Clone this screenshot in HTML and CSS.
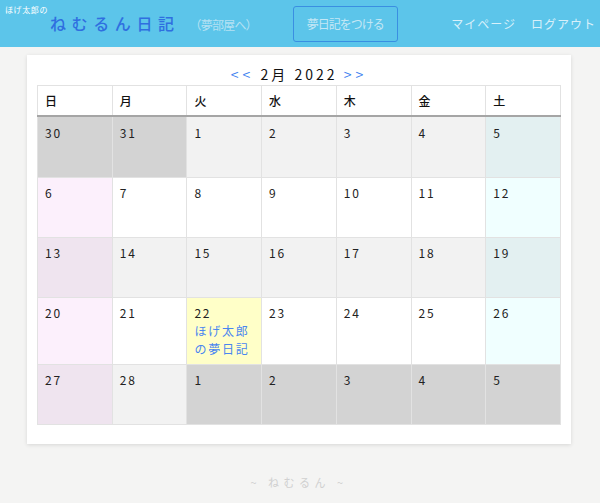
FILE: index.html
```html
<!DOCTYPE html>
<html lang="ja">
<head>
<meta charset="utf-8">
<link rel="stylesheet" href="styles.css">
</head>
<body>
<header class="header">
  <div class="brand">
    <div class="brand-owner">ほげ太郎の</div>
    <div class="brand-title">ねむるん日記</div>
  </div>
  <a class="room-link">（夢部屋へ）</a>
  <a class="write-btn">夢日記をつける</a>
  <nav class="nav">
    <a class="nav-link">マイページ</a>
    <a class="nav-link">ログアウト</a>
  </nav>
</header>
<main class="main">
  <section class="card">
    <div class="month-title"><a class="month-nav">&lt;&lt;</a> 2月 2022 <a class="month-nav">&gt;&gt;</a></div>
    <table class="cal">
      <thead>
        <tr><th>日</th><th>月</th><th>火</th><th>水</th><th>木</th><th>金</th><th>土</th></tr>
      </thead>
      <tbody>
        <tr class="striped first">
          <td class="other">30</td><td class="other">31</td><td>1</td><td>2</td><td>3</td><td>4</td><td class="sat">5</td>
        </tr>
        <tr>
          <td class="sun">6</td><td>7</td><td>8</td><td>9</td><td>10</td><td>11</td><td class="sat">12</td>
        </tr>
        <tr class="striped">
          <td class="sun">13</td><td>14</td><td>15</td><td>16</td><td>17</td><td>18</td><td class="sat">19</td>
        </tr>
        <tr>
          <td class="sun">20</td><td>21</td><td class="today">22<br><a class="entry">ほげ太郎の夢日記</a></td><td>23</td><td>24</td><td>25</td><td class="sat">26</td>
        </tr>
        <tr class="striped">
          <td class="sun">27</td><td>28</td><td class="other">1</td><td class="other">2</td><td class="other">3</td><td class="other">4</td><td class="other">5</td>
        </tr>
      </tbody>
    </table>
  </section>
  <footer class="footer">~ ねむるん ~</footer>
</main>
</body>
</html>
```
FILE: styles.css
```css
* { box-sizing: border-box; }
html, body { margin: 0; padding: 0; }
body {
  background: #f4f4f3;
  font-family: "Noto Sans CJK JP", "Noto Sans", sans-serif;
  color: #222;
  width: 600px;
  height: 503px;
  overflow: hidden;
}
.header {
  height: 47px;
  background: #5cc5ea;
  display: flex;
  align-items: center;
}
.brand {
  align-self: flex-start;
  padding-top: 4px;
  padding-left: 5px;
}
.brand-owner {
  font-size: 8px;
  line-height: 11px;
  color: #fff;
  letter-spacing: 0.6px;
}
.brand-title {
  margin-left: 45px;
  font-size: 16px;
  line-height: 16px;
  letter-spacing: 5.6px;
  color: #2f6fe0;
  font-weight: 500;
}
.room-link {
  margin-left: 10px;
  margin-top: 1px;
  font-size: 12px;
  letter-spacing: -0.8px;
  color: #b4e1f3;
}
.write-btn {
  margin-left: 36px;
  width: 105px;
  height: 36px;
  border: 1px solid #3a8fe2;
  border-radius: 3px;
  display: flex;
  align-items: center;
  justify-content: center;
  font-size: 12px;
  letter-spacing: -1px;
  color: #c4e7f5;
}
.nav {
  margin-left: auto;
  display: flex;
  gap: 15px;
  padding-right: 4px;
}
.nav-link {
  font-size: 12px;
  letter-spacing: 1px;
  color: #d8f0fa;
}
.main {
  padding: 8px 29px 0 27px;
}
.card {
  background: #fff;
  box-shadow: 0 1px 4px rgba(0,0,0,0.12);
  padding: 9px 10px 19px 10px;
}
.month-title {
  text-align: center;
  font-size: 14px;
  line-height: 21px;
  letter-spacing: 3px;
  color: #111;
}
.month-nav { color: #3c7ff0; letter-spacing: 4px; }
.cal {
  width: 100%;
  border-collapse: collapse;
  table-layout: fixed;
  font-size: 12px;
}
.cal th, .cal td {
  border: 1px solid #e2e2e2;
  text-align: left;
  vertical-align: top;
}
.cal th {
  height: 30px;
  padding: 0 7px;
  vertical-align: middle;
  font-weight: 500;
  color: #111;
  border-bottom: 2px solid #a5a5a5;
}
.cal td {
  height: 60px;
  padding: 6px 7px;
  line-height: 18px;
  letter-spacing: 1.8px;
  background: #fff;
}
.cal tr.first td { height: 62px; padding-top: 7px; }
.cal tr.striped td { background: #f2f2f2; }
.cal td.sun { background: #fcf0fc; }
.cal tr.striped td.sun { background: #efe4ef; }
.cal td.sat { background: #f0ffff; }
.cal tr.striped td.sat { background: #e3f0f1; }
.cal td.today { background: #ffffc8; }
.cal tr td.other, .cal tr.striped td.other { background: #d3d3d3; }
.entry { color: #4a86f0; }
.footer {
  text-align: center;
  margin-top: 30px;
  font-size: 11px;
  letter-spacing: 4.5px;
  color: #d0d0d0;
}
```
